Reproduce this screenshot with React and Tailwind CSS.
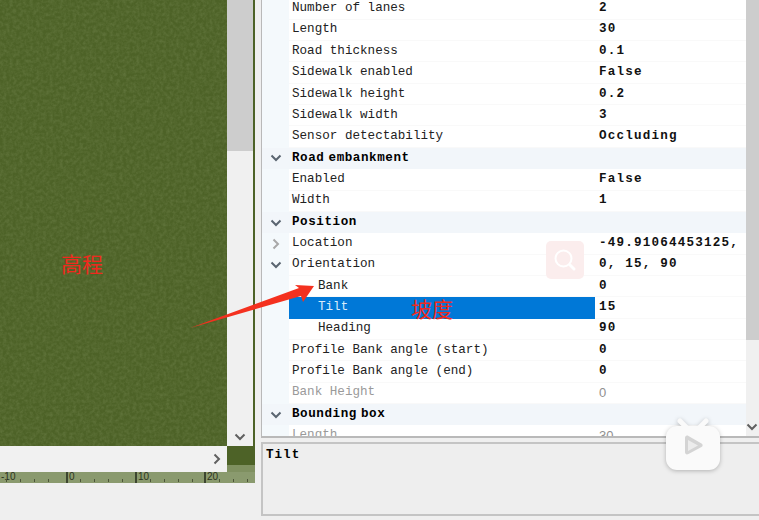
import React from 'react';

const rows = [
  { label: 'Number of lanes', value: '2' },
  { label: 'Length', value: '30' },
  { label: 'Road thickness', value: '0.1' },
  { label: 'Sidewalk enabled', value: 'False' },
  { label: 'Sidewalk height', value: '0.2' },
  { label: 'Sidewalk width', value: '3' },
  { label: 'Sensor detectability', value: 'Occluding' },
  { label: 'Road embankment', section: true },
  { label: 'Enabled', value: 'False' },
  { label: 'Width', value: '1' },
  { label: 'Position', section: true },
  { label: 'Location', value: '-49.91064453125,', caret: 'right' },
  { label: 'Orientation', value: '0, 15, 90', caret: 'down' },
  { label: 'Bank', value: '0', child: true },
  { label: 'Tilt', value: '15', child: true, selected: true },
  { label: 'Heading', value: '90', child: true },
  { label: 'Profile Bank angle (start)', value: '0' },
  { label: 'Profile Bank angle (end)', value: '0' },
  { label: 'Bank Height', value: '0', disabled: true },
  { label: 'Bounding box', section: true },
  { label: 'Length', value: '30', disabled: true },
];

const Chevron = ({ dir = 'down', className }) => (
  <svg width="12" height="12" viewBox="0 0 12 12" fill="none" stroke="currentColor" strokeWidth="2" className={className}>
    {dir === 'down' ? <path d="M1.5 3.5 6 8l4.5-4.5" /> : <path d="M3.5 1.5 8 6l-4.5 4.5" />}
  </svg>
);

const GrassTexture = () => (
  <svg className="absolute inset-0 w-full h-full" aria-hidden="true">
    <filter id="grass">
      <feTurbulence type="fractalNoise" baseFrequency="0.3" numOctaves="3" seed="4" />
      <feColorMatrix values="0 0 0 0 0.22  0 0 0 0 0.29  0 0 0 0 0.11  0.6 0 0 0 -0.2" />
    </filter>
    <rect width="100%" height="100%" filter="url(#grass)" />
  </svg>
);

const PropertyRow = ({ row }) => {
  if (row.section) {
    return (
      <div className="h-[21.35px] flex items-center bg-[#f2f6fa]">
        <div className="w-[30px] pr-[3px] shrink-0 flex justify-center text-[#5a6570]">
          <Chevron />
        </div>
        <span className="font-bold tracking-[0.55px] [word-spacing:-4px] text-black">{row.label}</span>
      </div>
    );
  }
  return (
    <div className="h-[21.35px] flex items-center">
      <div className="w-[27px] h-full shrink-0 flex items-center justify-center text-[#5a6570] bg-[#f4f9fc]">
        {row.caret === 'down' && <Chevron />}
        {row.caret === 'right' && <Chevron dir="right" className="text-[#a8a8a8]" />}
      </div>
      <div className={`w-[306px] h-full shrink-0 flex items-center ${row.child ? 'pl-[29px]' : 'pl-[3px]'} ${row.selected ? 'bg-[#0078d7] text-[#d8ecfb]' : 'border-b border-[#f9f9f9]'} ${row.disabled ? 'text-[#9a9a9a]' : ''}`}>
        {row.label}
      </div>
      <div className={`flex-1 h-full flex items-center pl-[4px] whitespace-nowrap overflow-hidden border-b border-[#f9f9f9] ${row.disabled ? 'text-[#909090] font-["Liberation_Sans",sans-serif] text-[13px]' : 'font-bold tracking-[1.2px] text-[#111]'}`}>
        {row.value}
      </div>
    </div>
  );
};

const ticks = [6, 20, 34, 48, 80, 94, 108, 122, 150, 164, 178, 192, 219, 233, 247];

export default function App() {
  return (
    <div className="relative w-[759px] h-[520px] overflow-hidden flex bg-[#efefef] font-['Liberation_Mono',monospace] text-[12.6px] text-[#222]">
      {/* Viewport side */}
      <div className="w-[255px] shrink-0 flex flex-col">
        <div className="h-[446px] flex bg-[#4d6227]">
          <div className="relative w-[227px] bg-[#4d6227] overflow-hidden">
            <GrassTexture />
          </div>
          <div className="w-[26px] bg-[#f0f0f0] flex flex-col items-center justify-between">
            <div className="w-full h-[151px] bg-[#cdcdcd]" />
            <Chevron className="mb-[3px] text-[#606060]" />
          </div>
        </div>
        <div className="h-[26px] flex">
          <div className="w-[227px] bg-[#f1f1f1] flex items-center justify-end pr-[4px] text-[#606060]">
            <Chevron dir="right" />
          </div>
          <div className="flex-1 flex flex-col">
            <div className="h-[19px] bg-[#4d6227]" />
            <div className="h-[7px] bg-[#7f9060]" />
          </div>
        </div>
        <div className="relative h-[11px] bg-[#8a9a6e] overflow-hidden font-['Liberation_Sans',sans-serif] text-[10px] leading-none text-[#2c3320]">
          {[
            { x: 66, t: '0' },
            { x: 135, t: '10' },
            { x: 204, t: '20' },
          ].map((m) => (
            <div key={m.x} className="absolute top-0 h-[11px] w-[2px] bg-[#3d4630]" style={{ left: m.x }}>
              <span className="absolute left-[3px] top-0">{m.t}</span>
            </div>
          ))}
          <span className="absolute left-[1px] top-0">-10</span>
          {ticks.map((x) => (
            <div key={x} className="absolute bottom-[1px] h-[3px] w-px bg-[#4c5539]" style={{ left: x }} />
          ))}
        </div>
      </div>

      {/* Properties side */}
      <div className="flex-1 flex flex-col pl-[6px]">
        <div className="h-[438px] flex border-l border-b-2 border-[#b9b9b9] bg-white overflow-hidden">
          <div className="flex-1 overflow-hidden">
            <div className="-mt-[1.6px]">
              {rows.map((row, i) => (
                <PropertyRow key={i} row={row} />
              ))}
            </div>
          </div>
          <div className="w-[13px] shrink-0 bg-[#f0f0f0] flex flex-col justify-between">
            <div className="h-[340px] bg-[#cdcdcd]" />
            <Chevron className="mb-[3px] text-[#606060]" />
          </div>
        </div>
        <div className="mt-[4px] h-[74px] border-2 border-r-0 border-[#c4c4c4] bg-[#eeeeee] px-[3px] pt-[2px]">
          <span className="font-bold tracking-[1px] text-black">Tilt</span>
        </div>
      </div>

      {/* Video annotations drawn over the recording */}
      <span className="absolute left-[61px] top-[250px] font-['Noto_Sans_CJK_SC',sans-serif] text-[21px] leading-[26px] text-[#f02a1e]">高程</span>
      <span className="absolute left-[411px] top-[295px] font-['Noto_Sans_CJK_SC',sans-serif] text-[21px] leading-[26px] text-[#f02a1e]">坡度</span>
      <svg className="absolute left-0 top-0" width="759" height="520" aria-hidden="true">
        <path d="M190 328 299 288 295 285 314 286 303 302 301 296Z" fill="#f4311f" />
      </svg>
      <div className="absolute left-[546px] top-[241px] w-[38px] h-[38px] rounded-[5px] bg-[#fbeded] flex items-center justify-center">
        <svg width="26" height="26" viewBox="0 0 26 26" fill="none" stroke="#ffffff" strokeWidth="2">
          <circle cx="11.5" cy="11.5" r="8" />
          <path d="m18 18 4 4" strokeWidth="3" strokeLinecap="round" />
        </svg>
      </div>
      <svg className="absolute left-[665px] top-[418px] drop-shadow-[0_1px_2px_rgba(0,0,0,0.25)]" width="56" height="54" viewBox="0 0 56 54" aria-hidden="true">
        <path d="M15 3l8 8M41 3l-8 8" stroke="#fafafa" strokeWidth="5" strokeLinecap="round" />
        <rect x="1" y="8" width="54" height="44" rx="11" fill="#fafafa" />
        <path d="M20 20c0-2 1.500-3 3.500-2l13 7.500c1.500 1 1.500 2.500 0 3.500l-13 7c-2 1-3.500 0-3.500-2Z" fill="#d4d4d4" />
        <path d="M23 22v11l10-5.500Z" fill="#ececec" />
      </svg>
    </div>
  );
}
